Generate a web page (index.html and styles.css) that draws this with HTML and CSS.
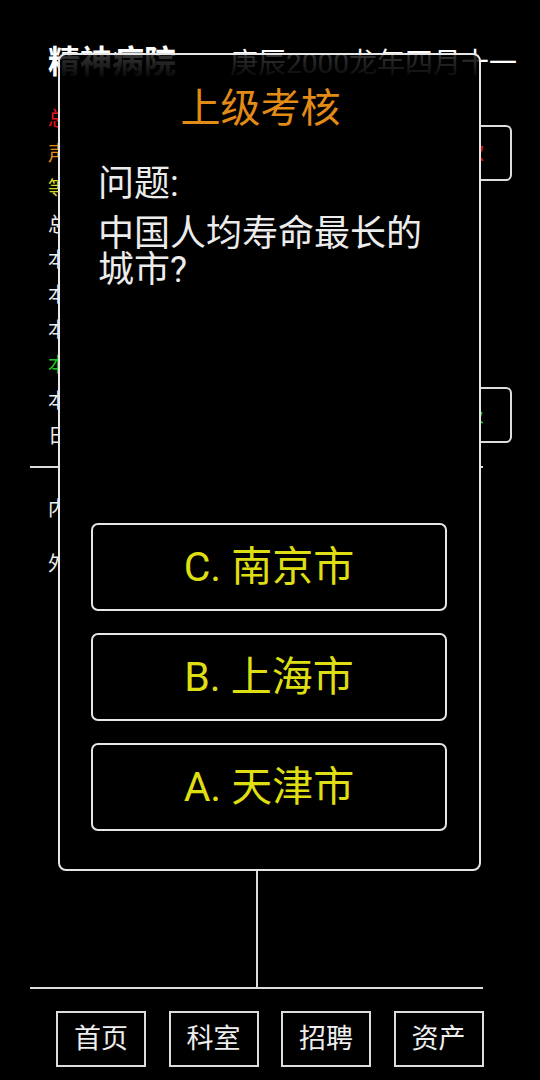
FILE: index.html
```html
<!DOCTYPE html>
<html lang="zh">
<head>
<meta charset="utf-8">
<title>精神病院</title>
<link rel="stylesheet" href="styles.css">
</head>
<body>
<div class="app">
  <header class="header">
    <span class="brand">精神病院</span>
    <span class="date">庚辰2000龙年四月十一</span>
  </header>

  <section class="main">
    <ul class="stats">
      <li class="red">总资</li>
      <li class="orange">声望</li>
      <li class="yellow">等级</li>
      <li>总床</li>
      <li>本日</li>
      <li>本月</li>
      <li>本年</li>
      <li class="green">本利</li>
      <li>本愈</li>
      <li>日期</li>
    </ul>
    <div class="side">
      <div class="side-box side-red">贷款</div>
      <div class="side-box side-green">升级</div>
    </div>
  </section>

  <section class="lower">
    <div class="dept">
      <div class="dept-item">内科</div>
      <div class="dept-item">外科</div>
    </div>
    <div class="dept-right"></div>
  </section>

  <nav class="nav">
    <div class="nav-btn">首页</div>
    <div class="nav-btn">科室</div>
    <div class="nav-btn">招聘</div>
    <div class="nav-btn">资产</div>
  </nav>
</div>

<div class="dialog">
  <h1 class="dialog-title">上级考核</h1>
  <p class="q-label">问题:</p>
  <p class="q-text">中国人均寿命最长的城市?</p>
  <div class="spacer"></div>
  <div class="options">
    <div class="option">C. 南京市</div>
    <div class="option">B. 上海市</div>
    <div class="option">A. 天津市</div>
  </div>
</div>
</body>
</html>
```

FILE: styles.css
```css
html, body {
  margin: 0;
  padding: 0;
  background: #000;
}
body {
  width: 540px;
  height: 1080px;
  overflow: hidden;
  position: relative;
  font-family: Roboto, "Noto Sans CJK SC", "Noto Sans", sans-serif;
  color: #eee;
}
.app {
  display: flex;
  flex-direction: column;
}

/* header */
.header {
  height: 100px;
  box-sizing: border-box;
  padding: 43px 0 0 48px;
  display: flex;
  align-items: baseline;
  gap: 54px;
  white-space: nowrap;
}
.brand {
  font-size: 32px;
  font-weight: bold;
  line-height: 38px;
  color: #fff;
}
.date {
  font-size: 28px;
  line-height: 38px;
  color: #fff;
}

/* main stats */
.main {
  height: 366px;
  display: flex;
  justify-content: space-between;
}
.stats {
  list-style: none;
  margin: 0;
  padding: 2px 0 0 48px;
  font-size: 20px;
  line-height: 35.2px;
  color: #eee;
}
.stats .red { color: #e8141e; }
.stats .orange { color: #e38b17; }
.stats .yellow { color: #d8d820; }
.stats .green { color: #22c422; }
.side {
  display: flex;
  flex-direction: column;
  padding-top: 25px;
  margin-right: 28px;
}
.side-box {
  width: 112px;
  height: 56px;
  box-sizing: border-box;
  border: 2px solid #ddd;
  border-radius: 6px;
  font-size: 20px;
  line-height: 52px;
  text-align: right;
  padding-right: 26px;
}
.side-red { color: #e8141e; }
.side-green { color: #22b43a; margin-top: 206px; }

/* lower */
.lower {
  margin-left: 30px;
  width: 453px;
  height: 523px;
  box-sizing: border-box;
  border-top: 2px solid #ddd;
  border-bottom: 2px solid #ddd;
  display: grid;
  grid-template-columns: 228px 1fr;
}
.dept {
  border-right: 2px solid #ddd;
  padding: 14px 0 0 18px;
}
.dept-item {
  font-size: 20px;
  line-height: 55px;
  color: #eee;
}

/* nav */
.nav {
  display: flex;
  gap: 22.5px;
  margin: 22px 0 0 56px;
}
.nav-btn {
  width: 90px;
  height: 56px;
  box-sizing: border-box;
  border: 2px solid #ddd;
  font-size: 27px;
  line-height: 52px;
  text-align: center;
  color: #eee;
}

/* dialog overlay */
.dialog {
  position: absolute;
  top: 53px;
  left: 58px;
  width: 423px;
  height: 818px;
  box-sizing: border-box;
  border: 2px solid #e6e6e6;
  border-radius: 8px;
  background: linear-gradient(rgba(0,0,0,0.8) 0, #000 26px);
  display: flex;
  flex-direction: column;
  padding: 30px 32px 38px 31px;
}
.dialog-title {
  margin: 0 17px 0 0;
  font-size: 40px;
  font-weight: normal;
  line-height: 48px;
  text-align: center;
  color: #e38b17;
}
.q-label {
  margin: 33px 0 0 7px;
  font-size: 36px;
  line-height: 36px;
  color: #ececec;
}
.q-text {
  margin: 14px 0 0 7px;
  font-size: 36px;
  line-height: 36px;
  color: #ececec;
}
.spacer { flex: 1; }
.options {
  display: flex;
  flex-direction: column;
  gap: 22px;
}
.option {
  height: 88px;
  box-sizing: border-box;
  border: 2px solid #e6e6e6;
  border-radius: 7px;
  font-size: 41px;
  line-height: 84px;
  text-align: center;
  color: #dede12;
}
```
